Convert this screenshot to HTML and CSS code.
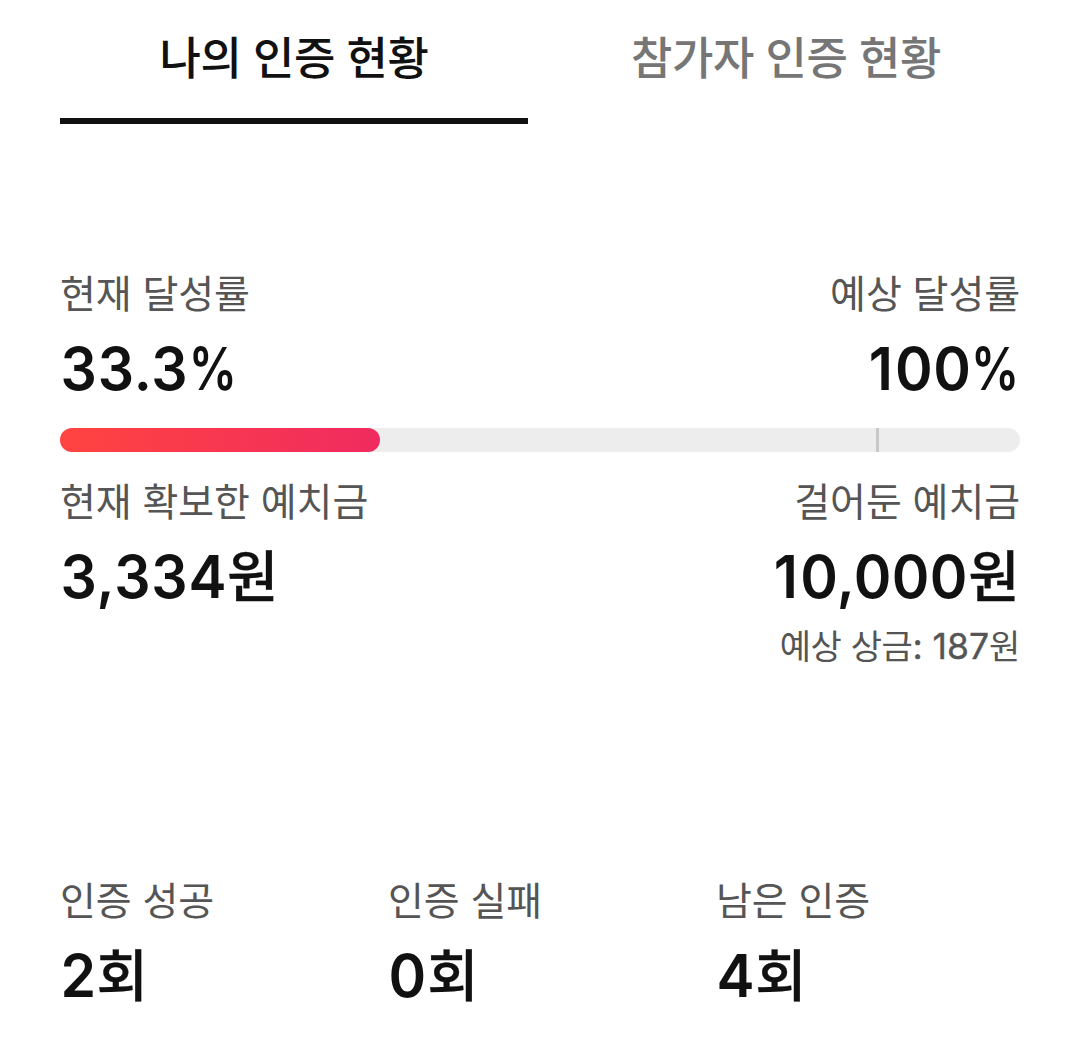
FILE: index.html
```html
<!DOCTYPE html>
<html lang="ko">
<head>
<meta charset="utf-8">
<title>나의 인증 현황</title>
<link rel="stylesheet" href="styles.css">
</head>
<body>
<nav class="tabs">
  <a class="tab tab-active">나의 인증 현황</a>
  <a class="tab">참가자 인증 현황</a>
</nav>
<main>
  <section class="progress">
    <div class="row">
      <div class="stat"><p class="label">현재 달성률</p><p class="value">33.3<span class="percent">%</span></p></div>
      <div class="stat stat-end"><p class="label">예상 달성률</p><p class="value"><span class="one">1</span>00<span class="percent">%</span></p></div>
    </div>
    <div class="bar"><div class="fill"></div><div class="marker"></div></div>
    <div class="row">
      <div class="stat"><p class="label">현재 확보한 예치금</p><p class="value">3,334<span class="unit">원</span></p></div>
      <div class="stat stat-end"><p class="label">걸어둔 예치금</p><p class="value"><span class="one">1</span>0,000<span class="unit">원</span></p><p class="note">예상 상금<span class="note-number">: 187</span>원</p></div>
    </div>
  </section>
  <section class="counts">
    <div class="stat"><p class="label">인증 성공</p><p class="value">2<span class="unit">회</span></p></div>
    <div class="stat"><p class="label">인증 실패</p><p class="value">0<span class="unit">회</span></p></div>
    <div class="stat"><p class="label">남은 인증</p><p class="value">4<span class="unit">회</span></p></div>
  </section>
</main>
</body>
</html>
```
FILE: styles.css
```css
* { box-sizing: border-box; }
body {
  margin: 0;
  padding: 0 60px;
  background: #fff;
  color: #111;
  font-family: Inter, "Noto Sans CJK KR", sans-serif;
}
p { margin: 0; }
.tabs { display: grid; grid-template-columns: 468px 1fr; column-gap: 24px; height: 124px; }
.tab {
  padding-top: 23px;
  border-bottom: 6px solid transparent;
  color: #767676;
  font-size: 45px;
  font-weight: 500;
  line-height: 72px;
  letter-spacing: -0.4px;
  text-align: center;
  white-space: nowrap;
}
.tab-active { border-color: #111; color: #111; }
.progress { padding-top: 140px; }
.row { display: flex; justify-content: space-between; }
.stat-end { text-align: right; }
.label { color: #555; font-size: 39px; line-height: 60px; letter-spacing: -0.08px; white-space: nowrap; }
.value {
  height: 90px;
  padding-left: 0.5px;
  font-size: 59.5px;
  font-weight: 600;
  line-height: 89px;
  letter-spacing: 0.9px;
  white-space: nowrap;
  transform: scaleX(0.96);
  transform-origin: left;
}
.stat-end .value { letter-spacing: 0.4px; transform-origin: right; }
.stat-end .one { letter-spacing: 2.4px; }
.unit {
  display: inline-block;
  position: relative;
  top: -1px;
  margin-right: 2px;
  font-size: 56px;
  font-weight: 500;
  line-height: 1;
  letter-spacing: -1px;
  -webkit-text-stroke: 0.3px currentColor;
  transform: scaleX(1.04);
  transform-origin: left;
}
.stat-end .unit { margin-right: 3.5px; }
.percent {
  display: inline-block;
  margin-right: -9.5px;
  font-weight: 600;
  transform: scaleX(0.84);
  transform-origin: left;
}
.note { height: 54px; color: #555; font-size: 34px; line-height: 50px; letter-spacing: -0.4px; white-space: nowrap; }
.note-number { font-size: 35.5px; font-weight: 400; line-height: 1; letter-spacing: 0; -webkit-text-stroke: 0.4px currentColor; }
.bar {
  position: relative;
  height: 24px;
  margin: 14px 0 20px;
  border-radius: 12px;
  background: #ededed;
}
.fill { width: 320px; height: 24px; border-radius: 12px; background: linear-gradient(90deg, #ff4440, #ef2b60); }
.marker { position: absolute; left: 816px; top: 0; width: 3px; height: 24px; background: #c8c8c8; }
.counts { display: grid; grid-template-columns: repeat(3, 304px); column-gap: 24px; padding-top: 195px; }
```
